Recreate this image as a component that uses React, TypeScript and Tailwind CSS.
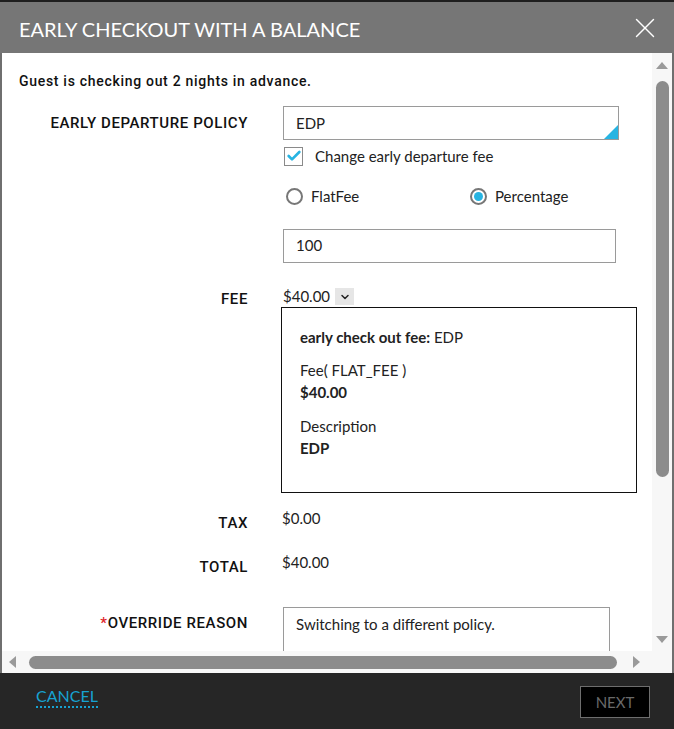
import { Check, ChevronDown, X } from "lucide-react";

const lato = "font-['Lato','Open_Sans',sans-serif]";
const din = "font-['Roboto','Liberation_Sans',sans-serif]";

function Label({ children, className = "" }: { children: React.ReactNode; className?: string }) {
  return (
    <div
      className={`w-[246px] shrink-0 text-right text-[15px] font-medium uppercase tracking-[0.6px] text-[#111] ${din} ${className}`}
    >
      {children}
    </div>
  );
}

function Radio({ checked, label }: { checked?: boolean; label: string }) {
  return (
    <label className="flex items-center gap-2">
      <span className="flex h-[17px] w-[17px] items-center justify-center rounded-full border-2 border-[#777] bg-white">
        {checked ? <span className="h-[9px] w-[9px] rounded-full bg-[#27b4e2]" /> : null}
      </span>
      <span>{label}</span>
    </label>
  );
}

export default function App() {
  return (
    <div className={`flex h-[729px] w-[674px] flex-col overflow-hidden bg-[#1e1e1e] ${lato}`}>
      <div className="h-[2px] shrink-0" />

      <header className="flex h-[51px] shrink-0 items-center justify-between bg-[#767676] pl-[19px] pr-[12px]">
        <h1 className="pt-[3px] text-[20px] font-normal uppercase text-white">Early checkout with a balance</h1>
        <button type="button" aria-label="Close" className="pt-[1px] text-white">
          <X className="h-[34px] w-[34px]" strokeWidth={1} />
        </button>
      </header>

      <div className="flex min-h-0 flex-1 flex-col border-x-2 border-[#6f6f6f] bg-white">
        <div className="flex min-h-0 flex-1">
          <div className="min-w-0 flex-1 overflow-hidden pt-[18px] text-[15px] text-[#222]">
            <p className={`pl-[17px] text-[14px] font-medium leading-[20px] tracking-[0.7px] text-[#111] ${din}`}>
              Guest is checking out 2 nights in advance.
            </p>

            <div className="mt-[15px] flex">
              <Label className="leading-[34px]">Early departure policy</Label>
              <div className="ml-[35px] flex flex-col">
                <div className="relative flex h-[34px] w-[336px] items-center border border-[#9a9a9a] px-[12px]">
                  EDP
                  <span className="absolute bottom-0 right-0 h-0 w-0 border-b-[14px] border-l-[14px] border-b-[#27b4e2] border-l-transparent" />
                </div>
                <label className="mt-[5px] flex items-center gap-[12px]">
                  <span className="ml-[1px] flex h-[19px] w-[19px] items-center justify-center border border-[#8a8a8a] bg-white text-[#27b4e2]">
                    <Check className="h-[16px] w-[16px]" strokeWidth={4} />
                  </span>
                  <span>Change early departure fee</span>
                </label>
                <div className="mt-[19px] flex h-[20px] items-center pl-[3px]">
                  <div className="w-[184px]">
                    <Radio label="FlatFee" />
                  </div>
                  <Radio checked label="Percentage" />
                </div>
                <div className="mt-[22px] flex h-[34px] w-[333px] items-center border border-[#9a9a9a] px-[12px]">100</div>
              </div>
            </div>

            <div className="mt-[24px] flex">
              <Label className="pt-[2px] leading-[20px]">Fee</Label>
              <div className="ml-[35px] flex flex-col">
                <div className="flex h-[20px] items-center gap-[5px]">
                  <span>$40.00</span>
                  <span className="flex h-[17px] w-[19px] items-center justify-center bg-[#e6e6e6] text-[#222]">
                    <ChevronDown className="h-[12px] w-[12px]" strokeWidth={3} />
                  </span>
                </div>
                <div className="-ml-[2px] h-[186px] w-[356px] border border-[#111] pl-[18px] pt-[18px] leading-[22px]">
                  <p>
                    <span className="font-bold">early check out fee:</span> EDP
                  </p>
                  <p className="mt-[11px]">Fee( FLAT_FEE )</p>
                  <p className="font-bold">$40.00</p>
                  <p className="mt-[12px]">Description</p>
                  <p className="font-bold">EDP</p>
                </div>
              </div>
            </div>

            <div className="mt-[15px] flex">
              <Label className="pt-[5px] leading-[20px]">Tax</Label>
              <div className="ml-[34px] leading-[20px]">$0.00</div>
            </div>

            <div className="mt-[19px] flex">
              <Label className="pt-[5px] leading-[20px]">Total</Label>
              <div className="ml-[34px] leading-[20px]">$40.00</div>
            </div>

            <div className="mt-[30px] flex">
              <Label className="pt-[6px] leading-[20px]">
                <span className="text-[#e0252b]">*</span>Override reason
              </Label>
              <div className="ml-[35px] h-[80px] w-[327px] border border-[#9a9a9a] px-[12px] pt-[6px] leading-[20px]">
                Switching to a different policy.
              </div>
            </div>
          </div>

          <div className="flex w-[20px] shrink-0 flex-col items-center bg-[#f7f7f7] pb-[8px] pt-[9px]">
            <span className="h-0 w-0 border-x-[6px] border-b-[7px] border-x-transparent border-b-[#9a9a9a]" />
            <span className="mt-[12px] h-[396px] w-[13px] rounded-full bg-[#8c8c8c]" />
            <span className="mt-auto h-0 w-0 border-x-[6px] border-t-[7px] border-x-transparent border-t-[#9a9a9a]" />
          </div>
        </div>

        <div className="flex h-[22px] shrink-0 items-center bg-[#f7f7f7] pl-[7px]">
          <span className="h-0 w-0 border-y-[6px] border-r-[7px] border-y-transparent border-r-[#9a9a9a]" />
          <span className="ml-[13px] h-[13px] w-[588px] rounded-full bg-[#8c8c8c]" />
          <span className="ml-[16px] h-0 w-0 border-y-[6px] border-l-[7px] border-y-transparent border-l-[#9a9a9a]" />
        </div>
      </div>

      <footer className="flex h-[56px] shrink-0 items-start justify-between bg-[#262626] pl-[36px] pr-[24px] pt-[13px]">
        <button
          type="button"
          className="border-b-2 border-dotted border-[#17a2d1] text-[16px] uppercase leading-[20px] text-[#17a2d1]"
        >
          Cancel
        </button>
        <button
          type="button"
          className="flex h-[32px] w-[70px] items-center justify-center border border-[#6e6e6e] bg-black text-[15px] uppercase text-[#6a6a6a]"
        >
          Next
        </button>
      </footer>
    </div>
  );
}
